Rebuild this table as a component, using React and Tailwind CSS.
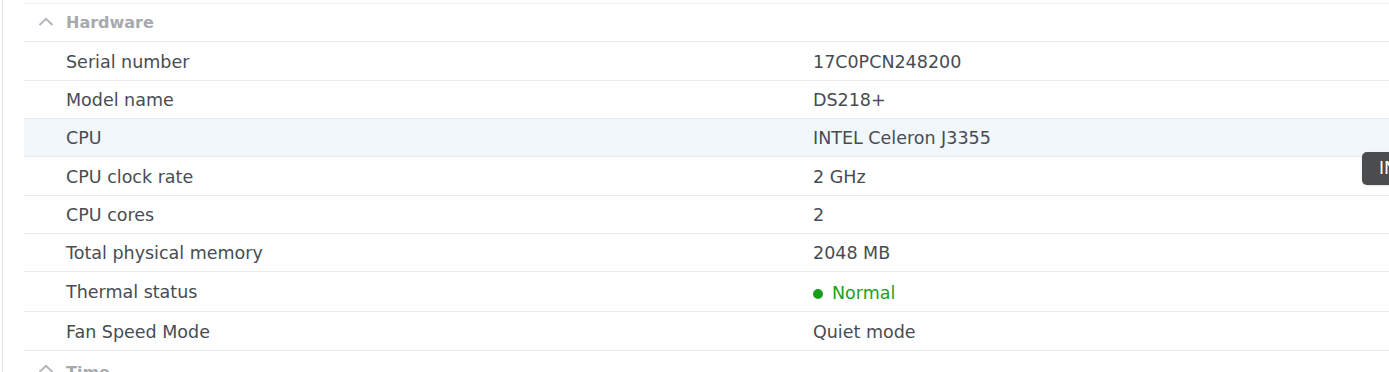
import React from 'react';

const rows = [
  { label: 'Serial number', value: '17C0PCN248200', h: 'h-[39px]' },
  { label: 'Model name', value: 'DS218+', h: 'h-[38px]' },
  { label: 'CPU', value: 'INTEL Celeron J3355', h: 'h-[38px]', hover: true },
  { label: 'CPU clock rate', value: '2 GHz', h: 'h-[39px]' },
  { label: 'CPU cores', value: '2', h: 'h-[38px]' },
  { label: 'Total physical memory', value: '2048 MB', h: 'h-[38px]' },
  { label: 'Thermal status', value: 'Normal', h: 'h-[40px]', status: true },
  { label: 'Fan Speed Mode', value: 'Quiet mode', h: 'h-[39px]' },
];

const Chevron = () => (
  <svg width="16" height="9" viewBox="0 0 16 9" fill="none" stroke="#b2b6ba" strokeWidth="2">
    <path d="M1.5 8 L8 1.8 L14.5 8" />
  </svg>
);

const App = () => {
  return (
    <div className="relative w-[1389px] h-[372px] overflow-hidden bg-white" style={{ fontFamily: '"DejaVu Sans", Verdana, sans-serif' }}>
      <div className="ml-[2px] h-full border-l border-[#e3e5e8] pl-[21px] pt-[3px]">
        <div className="border-t border-[#eceef1]">
          <div className="flex h-[38px] items-center border-b border-[#e8ebef]">
            <div className="flex w-[42px] justify-center pl-[2px] pb-[2px]">
              <Chevron />
            </div>
            <span className="text-[16px] font-bold text-[#a6aaae]">Hardware</span>
          </div>
          {rows.map((r, i) => (
            <div
              key={i}
              className={`flex items-center border-b border-[#e8ebef] pt-[2px] ${r.h} ${r.hover ? 'bg-[#f2f7fc]' : ''}`}
            >
              <div className="w-[789px] pl-[42px] text-[17.5px] text-[#474c53]">{r.label}</div>
              {r.status ? (
                <div className="flex items-center pt-[2px] text-[17.5px] text-[#1e9e1e]">
                  <span className="mr-[9px] inline-block h-[10px] w-[10px] rounded-full bg-[#17a017]" />
                  {r.value}
                </div>
              ) : (
                <div className="text-[17.5px] text-[#474c53]">{r.value}</div>
              )}
            </div>
          ))}
          <div className="flex h-[30px] items-start pt-[10px]">
            <div className="flex w-[42px] justify-center pl-[2px] pt-[3px]">
              <Chevron />
            </div>
            <span className="text-[16px] font-bold text-[#a6aaae]">Time</span>
          </div>
        </div>
      </div>
      <div className="absolute left-[1362px] top-[152px] flex h-[33px] items-center rounded-[5px] bg-[#4b4c4e] px-[17px] text-[17px] text-white shadow">
        INTEL
      </div>
    </div>
  );
};

export default App;
